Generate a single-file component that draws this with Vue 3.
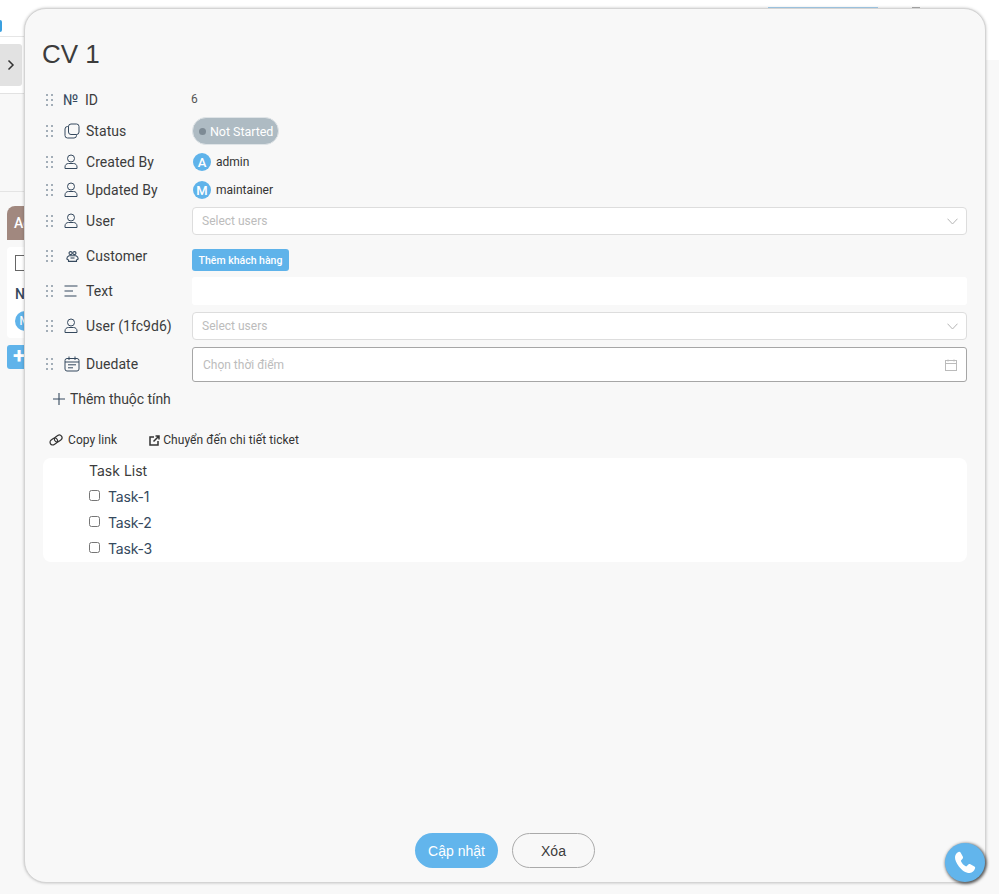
<script setup>
const personPath = 'M1 14.500v-1.500c0-2.200 1.500-3.500 3.500-3.500h5c2 0 3.500 1.300 3.500 3.500v1.500z'
</script>

<template>
  <div class="page">
    <header class="top">
      <span class="logo-arc"></span>
      <span class="spacer"></span>
      <span class="top-btn"></span>
      <span class="top-av"></span>
    </header>
    <div class="sub">
      <button class="toggle">
        <svg width="10" height="14" viewBox="0 0 10 14"><path d="M2.500 2.500 7 7l-4.500 4.500" fill="none" stroke="#333" stroke-width="1.500"/></svg>
      </button>
    </div>
    <div class="band"></div>
    <div class="board">
      <div class="card">
        <div class="card-head">Active</div>
        <div class="card-body">
          <span class="card-check"></span>
          <b class="card-name">Name</b>
          <span class="card-av">M</span>
        </div>
      </div>
      <div class="card-add">+</div>
    </div>
    <div class="right-strip"></div>

    <section class="modal">
      <h1 class="title">CV 1</h1>

      <div class="props">
        <span class="grip"><i v-for="d in 6" :key="d"></i></span>
        <span class="ic no">№</span>
        <span class="lab id-lab">ID</span>
        <span class="val id-val">6</span>

        <span class="grip"><i v-for="d in 6" :key="d"></i></span>
        <span class="ic">
          <svg width="16" height="16" viewBox="0 0 16 16" fill="none" stroke="#35495e" stroke-width="1"><rect x="4.500" y="1" width="10.500" height="10.500" rx="2.500"/><path d="M4.500 3.500H3.500a2.500 2.500 0 0 0-2.500 2.500v6.500A2.500 2.500 0 0 0 3.500 15H10a2.500 2.500 0 0 0 2.500-2.500v-1"/></svg>
        </span>
        <span class="lab">Status</span>
        <span class="val"><span class="pill"><i></i>Not Started</span></span>

        <span class="grip"><i v-for="d in 6" :key="d"></i></span>
        <span class="ic">
          <svg width="14" height="16" viewBox="0 0 14 16" fill="none" stroke="#35495e" stroke-width="1"><circle cx="7" cy="4.500" r="3.500"/><path :d="personPath"/></svg>
        </span>
        <span class="lab">Created By</span>
        <span class="val who"><span class="av">A</span>admin</span>

        <span class="grip"><i v-for="d in 6" :key="d"></i></span>
        <span class="ic">
          <svg width="14" height="16" viewBox="0 0 14 16" fill="none" stroke="#35495e" stroke-width="1"><circle cx="7" cy="4.500" r="3.500"/><path :d="personPath"/></svg>
        </span>
        <span class="lab">Updated By</span>
        <span class="val who"><span class="av">M</span>maintainer</span>

        <span class="grip"><i v-for="d in 6" :key="d"></i></span>
        <span class="ic">
          <svg width="14" height="16" viewBox="0 0 14 16" fill="none" stroke="#35495e" stroke-width="1"><circle cx="7" cy="4.500" r="3.500"/><path :d="personPath"/></svg>
        </span>
        <span class="lab">User</span>
        <span class="val">
          <span class="select">Select users
            <svg width="11" height="7" viewBox="0 0 11 7" fill="none" stroke="#b5b5b5"><path d="M.5.700l5 5.300 5-5.300"/></svg>
          </span>
        </span>

        <span class="grip"><i v-for="d in 6" :key="d"></i></span>
        <span class="ic cust">
          <svg width="13" height="11" viewBox="0 0 13 11" fill="none" stroke="#35495e" stroke-width="1.100"><rect x="3" y=".6" width="3.200" height="3" rx="1.500"/><rect x="6.800" y=".6" width="3.200" height="3" rx="1.500"/><path d="M3 4.800C1.500 5.500 .8 6.700.8 8l1.700 1V10.400h8V9L12.200 8c0-1.300-.7-2.500-2.200-3.200z"/><path d="M4.500 7h4"/></svg>
        </span>
        <span class="lab">Customer</span>
        <span class="val cust-val"><button class="add-cust">Thêm khách hàng</button></span>

        <span class="grip"><i v-for="d in 6" :key="d"></i></span>
        <span class="ic">
          <svg width="14" height="12" viewBox="0 0 14 12" fill="none" stroke="#35495e" stroke-width="1.100"><path d="M.5 1h13M.5 6h8.500M.5 11h12"/></svg>
        </span>
        <span class="lab">Text</span>
        <span class="val"><span class="textbox"></span></span>

        <span class="grip"><i v-for="d in 6" :key="d"></i></span>
        <span class="ic">
          <svg width="14" height="16" viewBox="0 0 14 16" fill="none" stroke="#35495e" stroke-width="1"><circle cx="7" cy="4.500" r="3.500"/><path :d="personPath"/></svg>
        </span>
        <span class="lab">User (1fc9d6)</span>
        <span class="val">
          <span class="select">Select users
            <svg width="11" height="7" viewBox="0 0 11 7" fill="none" stroke="#b5b5b5"><path d="M.5.700l5 5.300 5-5.300"/></svg>
          </span>
        </span>

        <span class="grip"><i v-for="d in 6" :key="d"></i></span>
        <span class="ic">
          <svg width="16" height="16" viewBox="0 0 16 16" fill="none" stroke="#35495e" stroke-width="1"><rect x="1" y="2.500" width="14" height="12.500" rx="2"/><path d="M1 6h14M5 .5v3.500M11 .5v3.500M4 8.800h8M4 11.800h5"/></svg>
        </span>
        <span class="lab">Duedate</span>
        <span class="val">
          <span class="date">Chọn thời điểm
            <svg width="12" height="12" viewBox="0 0 12 12" fill="none" stroke="#bbb"><rect x=".5" y="1.500" width="11" height="10"/><path d="M.5 4.500h11M3 .5v2M9 .5v2"/></svg>
          </span>
        </span>
      </div>

      <div class="add-prop">
        <svg width="14" height="14" viewBox="0 0 14 14" stroke="#35495e" stroke-width="1.100"><path d="M7 1v12M1 7h12"/></svg>
        Thêm thuộc tính
      </div>

      <div class="links">
        <span class="link">
          <svg width="14" height="12" viewBox="0 0 14 12" fill="none" stroke="#333" stroke-width="1.200"><g transform="rotate(-35 7 6)"><rect x=".3" y="3.300" width="8" height="5.400" rx="2.700"/><rect x="5.700" y="3.300" width="8" height="5.400" rx="2.700"/></g></svg>
          Copy link
        </span>
        <span class="link second">
          <svg width="11" height="11" viewBox="0 0 11 11" fill="none" stroke="#333" stroke-width="1.500"><path d="M5 2H1v8h8V6"/><path d="M4.500 6.500 9.500 1.500M6.500 1h3.500v3.500"/></svg>
          Chuyển đến chi tiết ticket
        </span>
      </div>

      <div class="tasks">
        <div class="task-title">Task List</div>
        <label v-for="n in 3" :key="n" class="task"><span class="box"></span>Task-{{ n }}</label>
      </div>

      <div class="grow"></div>

      <div class="actions">
        <button class="primary">Cập nhật</button>
        <button class="ghost">Xóa</button>
      </div>
    </section>

    <button class="phone">
      <svg width="24" height="24" viewBox="0 0 24 24" fill="#fff"><path d="M5.500 1c.9-.4 1.800 0 2.200.8l2.200 4c.3.700.2 1.400-.3 1.900L8.200 9.300c-.3.300-.3.700-.2 1 1 2.200 2.500 3.800 4.700 5 .4.200.8.100 1.100-.2l1.600-1.600c.6-.5 1.300-.6 2-.2l4 2.300c.8.400 1 1.300.6 2-.8 2.300-2.600 4.400-5.300 4.400-4.200 0-8-2.700-10.800-6.500C3.500 12 1.800 8.800 2 6 2.200 3.800 3.500 1.900 5.500 1z"/></svg>
    </button>
  </div>
</template>

<style>
html, body { margin: 0; background: #fff; }
</style>

<style scoped>
.page { position: relative; width: 999px; height: 894px; overflow: hidden; background: #f8f8f8; font-family: Roboto, "Liberation Sans", sans-serif; color: #3c3c3c; }
.top { height: 37px; background: #fff; display: flex; box-sizing: border-box; border-bottom: 1px solid #e6e6e6; padding-top: 7px; }
.logo-arc { width: 2px; height: 12px; margin-top: 13px; background: #3aa0e0; border-radius: 0 3px 3px 0; }
.spacer { flex: 1; }
.top-btn { width: 110px; height: 20px; background: #a9d4f2; margin-right: 34px; }
.top-av { width: 8px; height: 20px; background: #b0b0b0; margin-right: 79px; }
.sub { height: 56px; background: #fff; border-bottom: 1px solid #e2e2e2; display: flex; align-items: flex-start; }
.toggle { width: 22px; height: 42px; margin-top: 7px; border: 0; padding: 0; border-radius: 0 3px 3px 0; background: #e2e2e2; display: flex; align-items: center; justify-content: center; }
.band { height: 97px; background: #f8f8f8; border-bottom: 1px solid #e4e4e4; }
.board { padding: 14px 0 0 7px; }
.card { width: 120px; }
.card-head { height: 34px; line-height: 34px; background: #a1887f; color: #fff; font-size: 14px; font-weight: 500; padding-left: 7px; border-radius: 8px 8px 0 0; }
.card-body { margin-top: 7px; height: 91px; background: #fff; border-radius: 4px; display: flex; flex-direction: column; padding: 8px 8px 0; box-sizing: border-box; }
.card-check { width: 12px; height: 14px; border: 1px solid #666; }
.card-name { font-size: 14px; font-weight: 500; margin-top: 15px; line-height: 16px; color: #35495e; }
.card-av { width: 20px; height: 20px; margin-top: 9px; border-radius: 50%; background: #5fb3ea; color: #fff; font-size: 13px; text-align: center; line-height: 20px; }
.card-add { width: 40px; height: 24px; margin-top: 7px; background: #5fb3ea; color: #fff; font-size: 22px; font-weight: 700; line-height: 22px; padding-left: 6px; border-radius: 3px; }
.right-strip { position: absolute; left: 986px; top: 0; width: 13px; height: 894px; background: linear-gradient(#fff 60px, #f8f8f8 60px); }

.modal { position: absolute; left: 24px; top: 8px; width: 962px; height: 875px; box-sizing: border-box; background: #f8f8f8; border: 1px solid #d4d4d4; border-radius: 22px; box-shadow: 0 0 3px rgba(0,0,0,.25); padding: 0 18px 14px; display: flex; flex-direction: column; }
.title { margin: 29px 0 0 -1px; height: 47px; font-size: 26px; line-height: 32px; font-weight: 400; color: #3c3c3c; font-family: "Liberation Sans", Arial, sans-serif; }
.props { display: grid; grid-template-columns: 21px 22px 106px 775px; grid-template-rows: 29px 34px 28px 28px 34px 36px 34px 36px 40px; align-items: center; }
.grip { display: grid; grid-template-columns: 2px 2px; gap: 3px 3px; width: 7px; margin-left: 3px; }
.grip i { width: 2px; height: 2px; background: #a3aeb8; }
.ic { display: flex; align-items: center; justify-content: flex-start; color: #35495e; }
.no { font-size: 15px; font-weight: 400; margin-left: -1px; letter-spacing: -.5px; }
.cust { padding-left: 2px; }
.lab { font-size: 14px; color: #3c3c3c; letter-spacing: .05px; }
.id-lab { margin-left: -1px; }
.val { font-size: 12px; display: flex; align-items: center; }
.id-val { margin-top: -1px; color: #555; margin-left: -1px; }
.cust-val { margin-top: 8px; }
.pill { display: inline-flex; align-items: center; height: 28px; width: 87px; box-sizing: border-box; border-radius: 14px; background: #aebbc3; color: #fff; font-size: 12.500px; font-weight: 400; letter-spacing: -.05px; padding-left: 6px; border: 1px solid #dfe4e7; }
.pill i { width: 7px; height: 7px; border-radius: 50%; background: #7d8a94; margin-right: 4px; }
.who { gap: 5px; font-size: 12px; color: #333; }
.av { width: 18px; height: 18px; margin-left: 1px; border-radius: 50%; background: #5fb3ea; color: #fff; font-size: 13px; font-weight: 500; display: flex; align-items: center; justify-content: center; }
.select { width: 100%; height: 28px; box-sizing: border-box; background: #fff; border: 1px solid #ddd; border-radius: 4px; display: flex; align-items: center; justify-content: space-between; padding: 0 8px 0 9px; font-size: 12px; color: #bcbcbc; }
.add-cust { height: 22px; width: 97px; padding: 0; border: 0; border-radius: 3px; background: #5fb3ea; color: #fff; font-size: 10.500px; font-weight: 500; font-family: inherit; }
.textbox { width: 100%; height: 28px; background: #fff; border-radius: 3px; }
.date { width: 100%; height: 35px; box-sizing: border-box; background: #fff; border: 1px solid #a6a6a6; border-radius: 3px; display: flex; align-items: center; justify-content: space-between; padding: 2px 9px 0 10px; font-size: 12px; color: #bcbcbc; }
.add-prop { height: 30px; margin-left: 9px; display: flex; align-items: center; gap: 4px; font-size: 14px; color: #3c3c3c; letter-spacing: -.05px; }
.links { display: flex; margin: 15px 0 0 6px; height: 22px; align-items: center; font-size: 12px; letter-spacing: .07px; color: #333; }
.link { display: flex; align-items: center; gap: 5px; }
.second { margin-left: 32px; gap: 3px; }
.tasks { margin-top: 7px; height: 104px; box-sizing: border-box; background: #fff; border-radius: 8px; padding: 0 0 0 46px; font-family: Inter, "Liberation Sans", sans-serif; font-size: 14px; color: #35495e; }
.task-title { height: 25px; line-height: 26px; color: #3c3c3c; }
.task { height: 26px; display: flex; align-items: center; color: #35495e; letter-spacing: -.2px; }
.box { width: 9px; height: 9px; border: 1px solid #767676; border-radius: 2.500px; background: #fff; margin-right: 8px; margin-top: -1px; }
.grow { flex: 1; }
.actions { display: flex; justify-content: center; gap: 14px; }
.primary, .ghost { width: 83px; height: 35px; border-radius: 18px; font-size: 14px; font-family: "Liberation Sans", Arial, sans-serif; }
.primary { background: #62b5ec; border: 0; color: #fff; }
.ghost { background: #f8f8f8; border: 1px solid #aaa; color: #3c3c3c; }
.phone { position: absolute; left: 945px; top: 843px; width: 40px; height: 39px; padding: 0; border: 0; border-radius: 50%; background: #62b5ec; box-shadow: 1px 1px 3px 1px rgba(30,30,30,.65); display: flex; align-items: center; justify-content: center; }
</style>
